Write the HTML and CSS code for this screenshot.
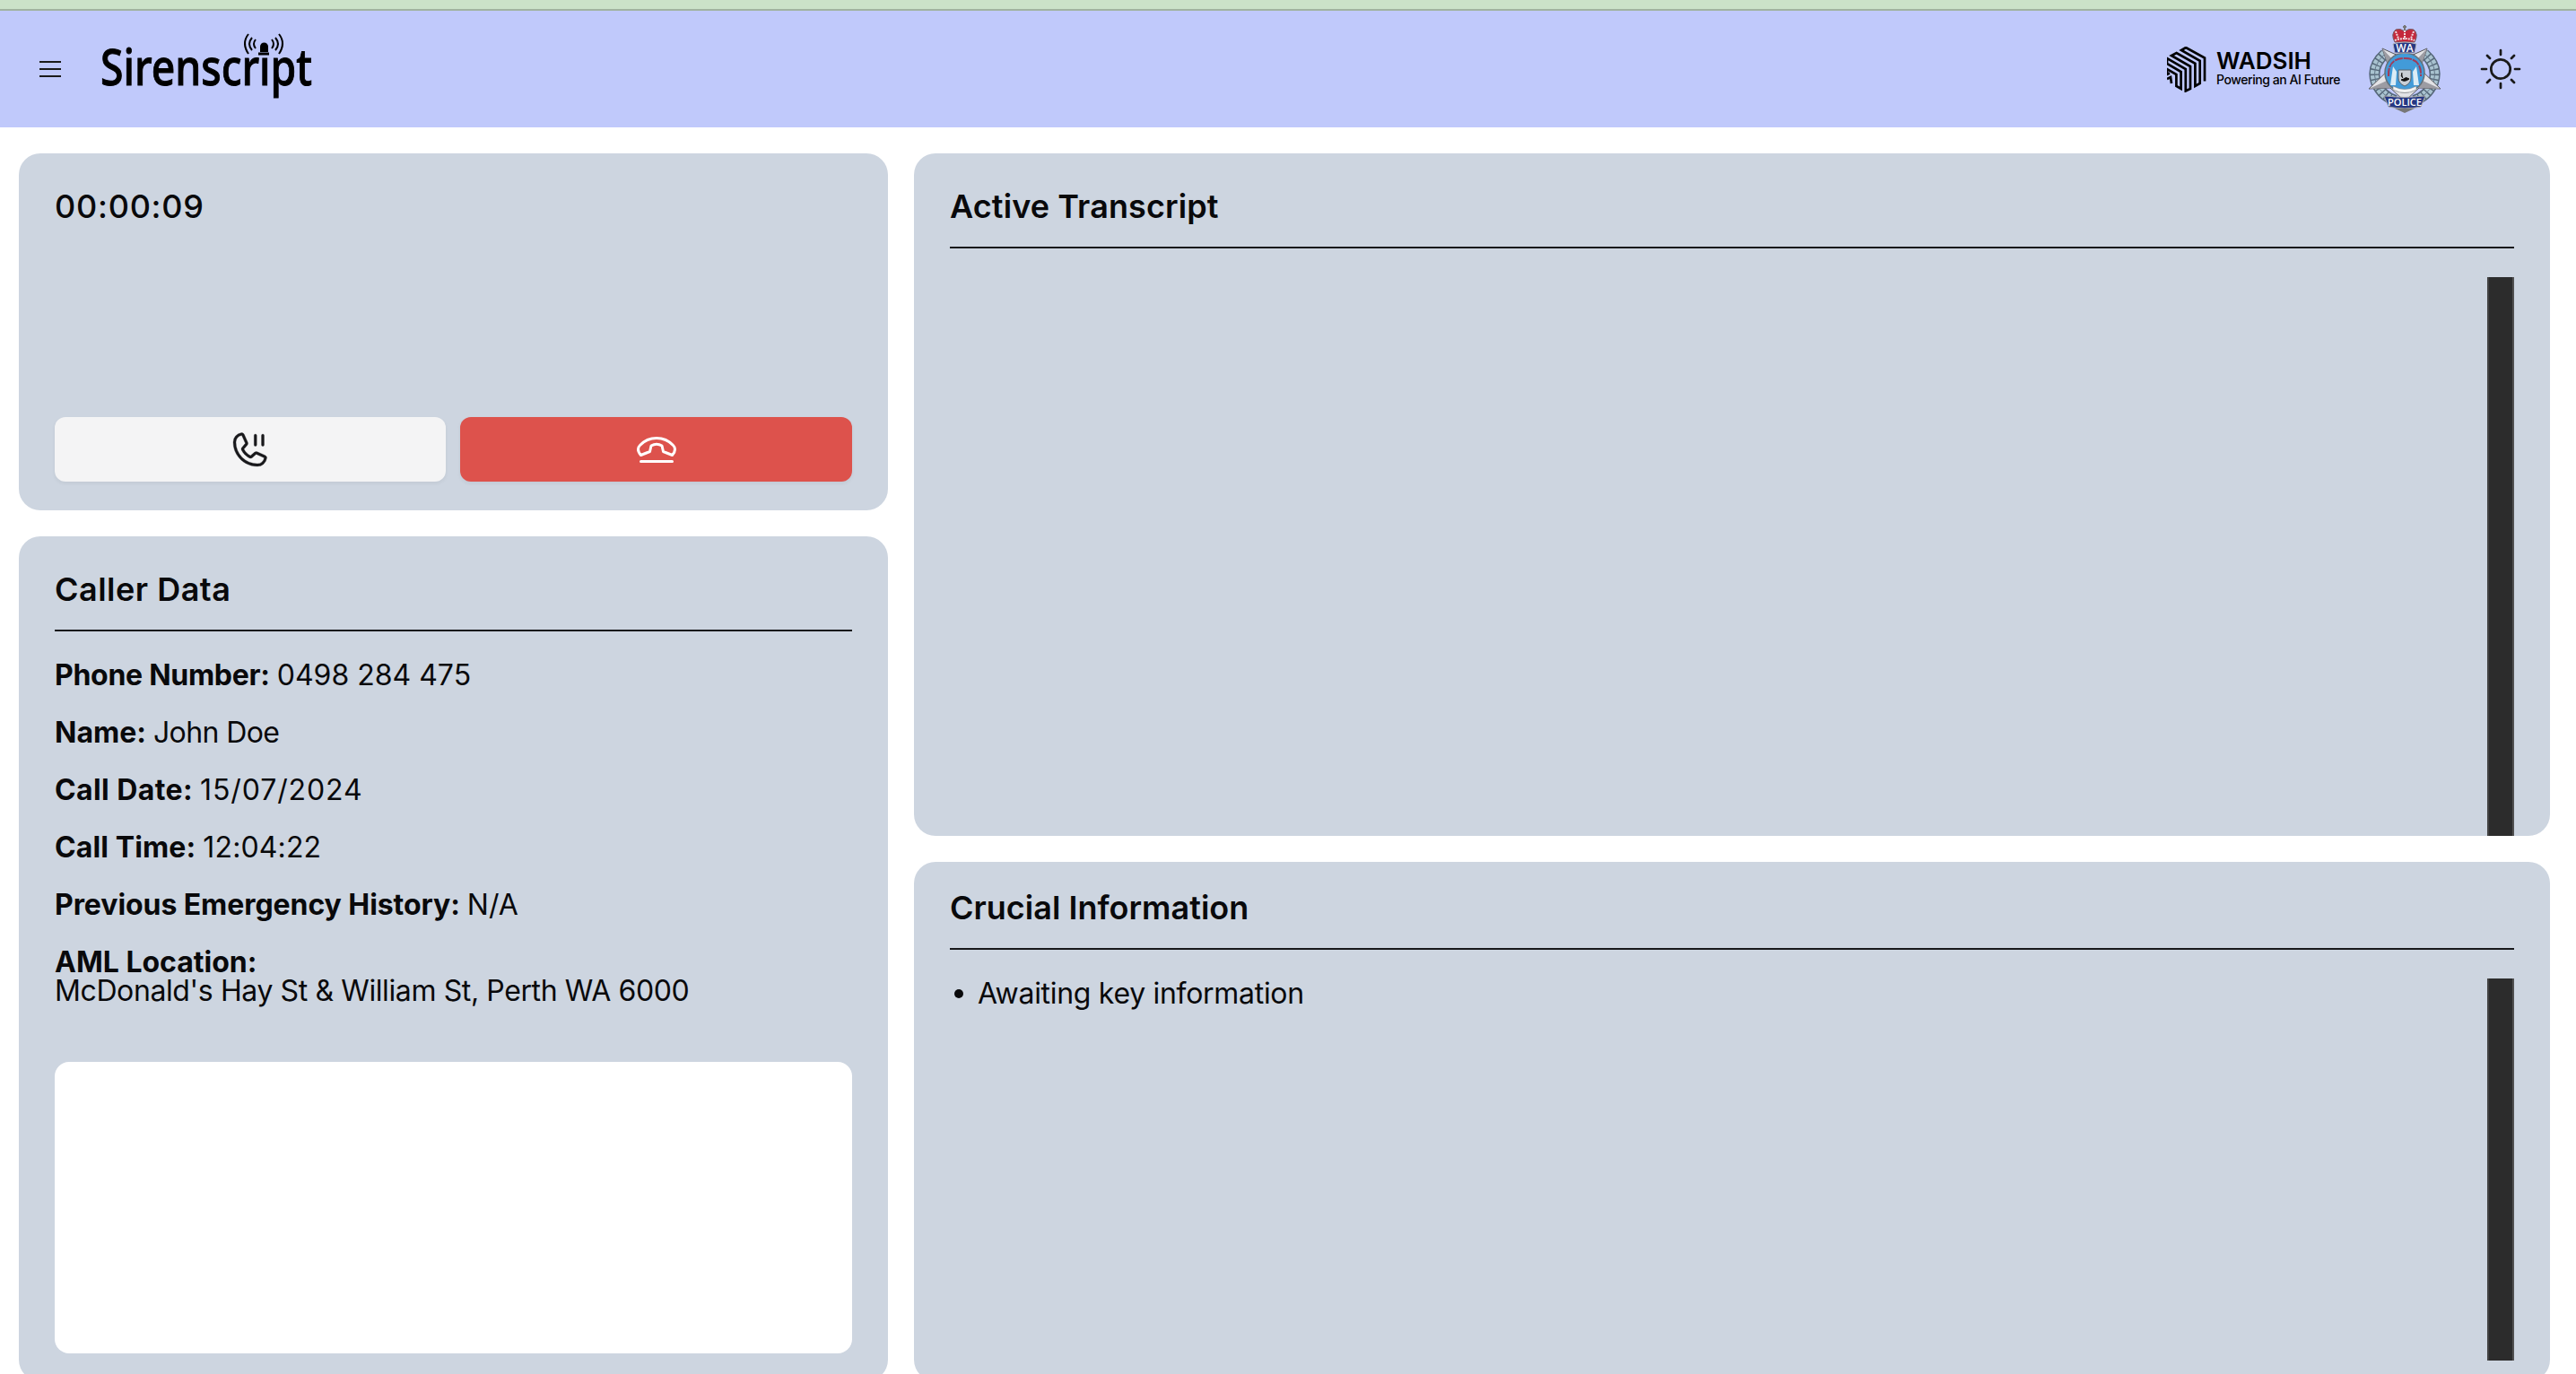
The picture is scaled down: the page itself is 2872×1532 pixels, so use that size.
FILE: index.html
```html
<!DOCTYPE html>
<html lang="en">
<head>
<meta charset="utf-8">
<title>Sirenscript</title>
<link rel="stylesheet" href="styles.css">
</head>
<body>
<header class="header">
  <div class="header-left">
    <svg class="menu-icon" viewBox="0 0 24 18"><path d="M0 1h24M0 9h24M0 17h24" stroke="#1a1a1a" stroke-width="2"/></svg>
    <svg class="logo" viewBox="0 0 240 80" role="img">
      <text x="-1" y="62" textLength="236" lengthAdjust="spacingAndGlyphs" class="logo-text">Sirenscript</text>
      <rect class="logo-mask" x="173" y="11" width="18" height="19"/>
      <path d="M177 25v-6a4.500 4.500 0 0 1 9 0v6z"/><rect x="175" y="25.500" width="12" height="3"/>
      <path class="wave" d="M172 11q-4 5 0 10M168 9q-6 7 0 14M164 5q-8 10 0 22M190 11q4 5 0 10M194 9q6 7 0 14M198 5q8 10 0 22"/>
    </svg>
  </div>
  <div class="header-right">
    <div class="wadsih">
      <svg class="cube" viewBox="0 0 44 51"><path d="M42 38.500V12.500L21 1 16 4 36.700 15.700V41L31.400 44V18.800L10.600 7 5 10 26 22V47L20.800 49.500V25L0 13V19L15.600 28V47L10.400 44V31L0 25V31L3 29.500M0 36 4 34 5 41"/></svg>
      <div class="wadsih-text"><div class="wadsih-name">WADSIH</div><div class="wadsih-tag">Powering an AI Future</div></div>
    </div>
    <svg class="badge" viewBox="0 0 80 100">
      <path d="M18 33Q2 47 8 65q7 16 22 20M62 33Q78 47 72 65 65 81 50 85" fill="none" stroke="#56687a" stroke-width="12"/>
      <path d="M18 33Q2 47 8 65q7 16 22 20M62 33Q78 47 72 65 65 81 50 85" fill="none" stroke="#a9c3d0" stroke-width="9" stroke-dasharray="4 1.500"/>
      <path d="M18 33Q2 47 8 65q7 16 22 20M62 33Q78 47 72 65 65 81 50 85" fill="none" stroke="#64798a" stroke-width="1"/>
      <path d="m15 27 20 9 5-10 5 10 20-9-8 23 23 22-24-1-16 15-16-15-24 1 23-22z" fill="#e3e3e6" stroke="#55565c"/>
      <path d="m15 27 8 23 17 4zM65 27l-8 23-17 4zM0 72l24-1 16-17zM80 72l-24-1-16-17z" fill="#9c9ca3"/>
      <circle cx="40" cy="54" r="22" fill="#429bd9" stroke="#65717a" stroke-width="1.500"/>
      <path d="M22 58q-1-20 18-20t18 20" fill="none" stroke="#a13b58" stroke-width="2" stroke-dasharray="9 1"/>
      <path d="M33 51h14v9q0 6-7 9-7-3-7-9z" fill="#c9cfd6" stroke="#59636b"/>
      <path d="M37 54q-2 4 1 6M36 62q4 3 9-1-4-3-6 0z" fill="#111" stroke="#111"/>
      <path d="M27 47l4 6-1 15h-6zM53 47l-4 6 1 15h6z" fill="#dcecf5"/>
      <path d="M27 69q13 7 26 0v4q-13 7-26 0z" fill="#f3f3f3" stroke="#777" stroke-width=".5"/>
      <path d="M30 6q-6 5-1 14h22q5-9-1-14-5-2-10 2-5-4-10-2z" fill="#c4283c" stroke="#76626b"/>
      <path d="M40 1v6M38 3h4" stroke="#777" stroke-width="2"/>
      <path d="M40 7v10M30 8l3 8M50 8l-3 8M29 18q11-4 22 0" fill="none" stroke="#f1dfe2" stroke-width="2" stroke-dasharray="2 1"/>
      <path d="M27 22q13-4 26 0l-2 10H29z" fill="#263783" stroke="#b5b6bd"/>
      <path d="M17 80q23 3 46 0l-5 12q-18 4-36 0z" fill="#263783" stroke="#a5a5a5"/>
      <path d="M29 94h22l-11 5z" fill="#777"/>
      <text x="40" y="31" class="badge-wa">WA</text><text x="40" y="90.500" class="badge-police" textLength="38" lengthAdjust="spacingAndGlyphs">POLICE</text>
    </svg>
    <svg class="sun" viewBox="0 0 46 46"><circle cx="23" cy="23" r="10.700"/><path d="M23 2v5M23 39v5M2 23h5M39 23h5M8 8l3 3M35 35l3 3M8 38l3-3M35 11l3-3"/></svg>
  </div>
</header>
<main class="main">
  <div class="column-left">
    <section class="card call-card">
      <div class="timer">00:00:09</div>
      <div class="buttons">
        <button class="btn hold"><svg class="hold-icon" viewBox="0 0 256 256"><path d="M222.370 158.460l-47.110-21.110-.13-.06a16 16 0 0 0-15.170 1.400 8.120 8.120 0 0 0-.75.560L134.870 160c-15.420-7.490-31.340-23.290-38.830-38.510l20.780-24.710c.2-.25.390-.5.570-.77a16 16 0 0 0 1.320-15.060v-.12L97.540 33.640a16 16 0 0 0-16.620-9.520A56.260 56.260 0 0 0 32 80c0 79.400 64.600 144 144 144a56.260 56.260 0 0 0 55.880-48.920 16 16 0 0 0-9.510-16.620ZM176 208A128.140 128.140 0 0 1 48 80a40.200 40.200 0 0 1 34.870-40 .61.610 0 0 0 0 .12l21 47-20.670 24.740a6.130 6.130 0 0 0-.57.770 16 16 0 0 0-1 15.700c9.060 18.530 27.730 37.060 46.460 46.110a16 16 0 0 0 15.750-1.140 8.440 8.440 0 0 0 .74-.56L168.890 152l47 21.050h.11A40.210 40.210 0 0 1 176 208ZM200 96V40a8 8 0 0 1 16 0v56a8 8 0 0 1-16 0Zm-44 0V40a8 8 0 0 1 16 0v56a8 8 0 0 1-16 0Z"/></svg></button>
        <button class="btn end"><svg class="end-icon" viewBox="0 0 48 32"><path d="M6.500 22.500Q1 16 5.500 11.500 13 3.500 24 3.500T42.500 11.500Q47 16 41.500 22.500L31.500 18.500 30 12Q24 8.500 18 12L16.500 18.500ZM6.500 29.500h35"/></svg></button>
      </div>
    </section>
    <section class="card caller-card">
      <h2 class="title-caller">Caller Data</h2>
      <div class="details">
        <p class="phone"><b>Phone Number:</b> <span>0498 284 475</span></p>
        <p class="name"><b>Name:</b> <span>John Doe</span></p>
        <p class="date"><b>Call Date:</b> <span>15/07/2024</span></p>
        <p class="time"><b>Call Time:</b> <span>12:04:22</span></p>
        <p class="history"><b>Previous Emergency History:</b> <span>N/A</span></p>
        <p class="location"><b>AML Location:</b><br><span>McDonald's Hay St &amp; William St, Perth WA 6000</span></p>
      </div>
      <div class="map"></div>
    </section>
  </div>
  <div class="column-right">
    <section class="card transcript-card">
      <h2 class="title-transcript">Active Transcript</h2>
      <div class="scroll-area"><div class="scrollbar"></div></div>
    </section>
    <section class="card crucial-card">
      <h2>Crucial Information</h2>
      <div class="scroll-area">
        <ul><li>Awaiting key information</li></ul>
        <div class="scrollbar"></div>
      </div>
    </section>
  </div>
</main>
</body>
</html>
```
FILE: styles.css
```css
* { box-sizing: border-box; }
body { margin: 0; height: 1532px; overflow: hidden; background: #fff; color: #09090b; font-family: Inter, "Liberation Sans", sans-serif; font-size: 32px; line-height: 32px; }
h2, p, ul { margin: 0; padding: 0; }
.header { height: 142px; border-top: 10px solid #cbe2c8; background: #c0c9fb; box-shadow: inset 0 2px #a1b29f; display: flex; justify-content: space-between; padding: 2px 61px 0 44px; }
.header-left, .header-right { display: flex; align-items: center; }
.menu-icon { width: 24px; height: 18px; }
.logo { width: 240px; height: 80px; margin: -9px 0 0 45px; overflow: visible; }
.logo-text { font: 500 57px "Noto Sans", sans-serif; stroke: #000; stroke-width: 1; }
.logo-mask { fill: #c0c9fb; }
.wave { fill: none; stroke: #000; stroke-width: 2; }
.wadsih { display: flex; align-items: center; width: 195px; }
.cube { width: 44px; height: 51px; margin-top: 1px; fill: none; stroke: #000; stroke-width: 2.7; }
.wadsih-text { margin-left: 11px; color: #000; white-space: nowrap; }
.wadsih-name { font-size: 26px; font-weight: 600; line-height: 24px; }
.wadsih-tag { font-size: 14px; font-weight: 500; line-height: 18px; letter-spacing: -.43px; }
.badge { width: 80px; height: 100px; margin-left: 30px; }
.badge-wa, .badge-police { font: 600 12px "Open Sans", sans-serif; fill: #fff; text-anchor: middle; }
.badge-police { font-size: 11px; }
.sun { width: 46px; height: 46px; margin-left: 44px; fill: none; stroke: #1a1a1a; stroke-width: 2.7; stroke-linecap: round; }
.main { display: grid; grid-template-columns: 969px 1824px; gap: 29px; padding: 29px 0 0 21px; }
.column-left, .column-right { display: flex; flex-direction: column; gap: 29px; }
.card { background: #cdd5e0; border-radius: 24px; padding: 40px; }
.call-card { height: 398px; display: flex; flex-direction: column; justify-content: space-between; padding-bottom: 32px; }
.timer { font-size: 36px; font-weight: 500; line-height: 38px; letter-spacing: .75px; }
.buttons { display: grid; grid-template-columns: 436px 437px; gap: 16px; }
.btn { height: 72px; border: 0; border-radius: 12px; display: flex; align-items: center; justify-content: center; padding: 0; box-shadow: 0 2px 4px rgba(0,0,0,.06); }
.hold { background: #f4f4f5; padding: 1px 3px 0 0; }
.end { background: #dd524c; }
.hold-icon { width: 48px; height: 48px; fill: #18181b; stroke: #18181b; stroke-width: 1.5; }
.end-icon { width: 48px; height: 32px; fill: none; stroke: #fff; stroke-width: 3; stroke-linecap: round; stroke-linejoin: round; }
h2 { height: 66px; border-bottom: 2px solid #18181b; font-size: 36px; line-height: 38px; font-weight: 600; white-space: nowrap; }
.title-caller { letter-spacing: .5px; }
.title-transcript { letter-spacing: .1px; }
.caller-card { height: 942px; }
.details { display: flex; flex-direction: column; gap: 32px; margin-top: 33px; }
.details p { white-space: nowrap; }
.details b { font-weight: 700; }
.details b + span { margin-left: -1px; }
.details br + span { margin-left: 0; letter-spacing: -.39px; }
.phone b { letter-spacing: -.28px; }
.name span { letter-spacing: -.6px; }
.date b { letter-spacing: .4px; }
.date span { letter-spacing: .9px; }
.time b, .time span { letter-spacing: .12px; }
.history b { letter-spacing: -.07px; }
.map { height: 325px; margin-top: 63px; background: #fff; border-radius: 16px; }
.transcript-card { height: 761px; padding-bottom: 0; display: flex; flex-direction: column; }
.crucial-card { height: 579px; padding-top: 32px; padding-bottom: 23px; display: flex; flex-direction: column; }
.scroll-area { display: flex; justify-content: flex-end; flex: 1; margin-top: 32px; }
ul { flex: 1; list-style: none; }
li { display: flex; align-items: center; gap: 16px; padding: 1px 0 0 5px; letter-spacing: -.3px; }
li::before { content: ""; width: 10px; height: 10px; border-radius: 50%; background: #09090b; }
.scrollbar { width: 30px; background: #2c2c2c; border-left: 2px solid #414141; border-right: 2px solid #505050; }
```
